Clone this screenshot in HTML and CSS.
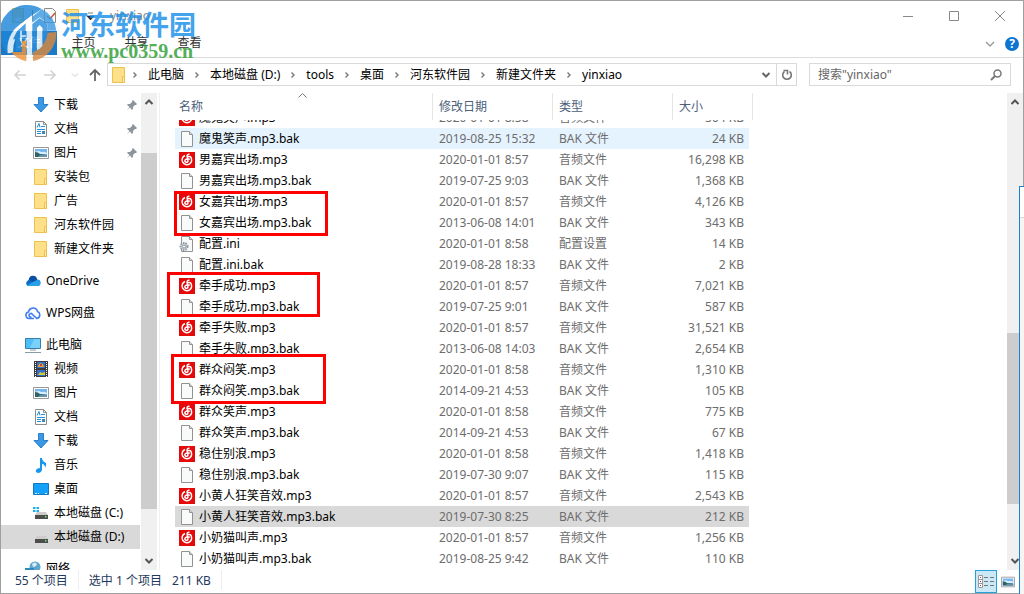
FILE: index.html
```html
<!DOCTYPE html>
<html lang="zh-CN">
<head>
<meta charset="utf-8">
<title>yinxiao</title>
<meta name="viewport" content="width=device-width">
<link rel="stylesheet" href="styles.css">
</head>
<body>
<svg class="defs" aria-hidden="true">
  <symbol id="folder" viewBox="0 0 16 16"><path d="M1.500 .5h12v15h-12z" fill="#ffe08a" stroke="#ecc24d"/><path d="M11.500 9.500h2v6h-2z" fill="#ffe9a8" stroke="#ecc24d"/></symbol>
  <symbol id="download" viewBox="0 0 16 16"><path d="M5.500 .5h5v7h4.500L8 15 1 7.500h4.500z" fill="#3c97e4" stroke="#2a7fcb"/></symbol>
  <symbol id="doc" viewBox="0 0 16 16"><path d="M2.500 .5h8l3 3v12h-11z" fill="#fff" stroke="#8b8b8b"/><path d="M10.500 .5v3h3" fill="none" stroke="#8b8b8b"/><path d="M4 6.500 6 2.500 7 6.500M8 5.500h4M4 8.500h8M4 10.500h4M4 12.500h4" fill="none" stroke="#1c8fd6"/><path d="M9 10h3v3H9z" fill="#3d86b5"/></symbol>
  <symbol id="picture" viewBox="0 0 16 16"><path d="M.5 2.500h15v11H.5z" fill="#fff" stroke="#999"/><path d="M2 4h12v8H2z" fill="#73b5ef"/><path d="M2 7q4-2 6 0 3-1 6 1v1H2z" fill="#d7effc"/><path d="M2 7q3 0 5 2l7 1v2H2z" fill="#2e6265"/><path d="M7 10h7v2H5z" fill="#6891a8"/></symbol>
  <symbol id="pin" viewBox="0 0 12 12"><path d="M7 1l4 4-1 1h-1L7 8v2L6 11 4 8.500 1 11 3.500 8 1 6l1-1h2l2-2V2z" fill="#8a959e"/></symbol>
  <symbol id="onedrive" viewBox="0 0 16 16"><path d="M3 13a3 3 0 0 1 0-5.500A5 5 0 0 1 12 6.500 3.300 3.300 0 0 1 13 13z" fill="#0f6cc4"/><path d="M4 7a4 4 0 0 1 8-.5L8 9z" fill="#0a4fa3"/><path d="M2 12.500 8 9l5-2.300A3.300 3.300 0 0 1 13 13H3z" fill="#27a0ea"/></symbol>
  <symbol id="wps" viewBox="0 0 16 16"><path d="M9 13.500H4a3.300 3.300 0 0 1-.5-6.500 4.600 4.600 0 0 1 9-.5A3.700 3.700 0 0 1 12 13.500L7.500 9.500a1.800 1.800 0 1 0-1 2.500" fill="none" stroke="#3f7df0" stroke-width="1.600"/></symbol>
  <symbol id="pc" viewBox="0 0 16 16"><path d="M.5 1.500h15v10H.5z" fill="#4fbdf7" stroke="#367fa9"/><path d="M9 2h6v9H5z" fill="#7bd0fb"/><path d="M5 13h6M0 15.500h16" stroke="#8a9ba5"/></symbol>
  <symbol id="video" viewBox="0 0 16 16"><path d="M1 0h14v16H1z" fill="#3c3c3c"/><path d="M2.500 1v15M13.500 1v15" stroke="#fff" stroke-dasharray="1 1"/><path d="M4 1h8v6H4zM4 9h8v6H4z" fill="#376fd0"/><path d="M5 5l2-3 3 1 1 3H5z" fill="#e5a72c"/><path d="M5 14l2-3 2 1 3-1v3z" fill="#c9cf38"/><path d="M7 3h2v2H7z" fill="#cb3d35"/></symbol>
  <symbol id="music" viewBox="0 0 16 16"><path d="M7 1h2q0 3 4 5 1 2-1 5 0-4-3-4v6q-1 3-4 3-3-1-2-3 1-2 4-2z" fill="#1897ef"/></symbol>
  <symbol id="desktop" viewBox="0 0 16 16"><path d="M.5 2.500h15v11H.5z" fill="#12a0fa" stroke="#1178bf"/><path d="M2 12.500h2M5 12.500h1M12 12.500h2" stroke="#d8f1ff"/></symbol>
  <symbol id="drive" viewBox="0 0 16 16"><path d="M4 7h9l2 3H2z" fill="#ccc"/><path d="M2 10h13v4H2z" fill="#4d4d4d"/><path d="M12 11h1.500v1.500H12z" fill="#5ff06f"/></symbol>
  <symbol id="sysdrive" viewBox="0 0 16 16"><use href="#drive"/><path d="M0 2h2.500v2H0zM3.500 2H6v2H3.500zM0 5h2.500v2H0zM3.500 5H6v2H3.500z" fill="#16b0f0"/></symbol>
  <symbol id="network" viewBox="0 0 16 16"><circle cx="10" cy="6" r="5.500" fill="#5fa6cc"/><path d="M7 3q3-3 5 0-1 3-4 3z" fill="#d5edf7"/><path d="M0 7h9v7H0z" fill="#2f89bb"/></symbol>
  <symbol id="mp3" viewBox="0 0 16 16"><path d="M0 0h16v16H0z" fill="#e50a0a"/><path d="M6 3.500a4.800 4.800 0 1 0 5.500 1.300Q9.500 4 8 5.200M8.300 5 9 9.300a1.600 1.600 0 1 1-2.200-2q2.500-1.300 4 .2M8.200 5.200Q7.500 2 10.500 2.300" fill="none" stroke="#fff" stroke-width="1.500"/></symbol>
  <symbol id="bak" viewBox="0 0 16 16"><path d="M2.500 .5h8l3 3v12h-11z" fill="#f9fafa" stroke="#929292"/><path d="M10.500 .5v3h3" fill="#ddd" stroke="#929292"/></symbol>
  <symbol id="ini" viewBox="0 0 16 16"><use href="#bak"/><circle cx="5" cy="10.500" r="3.500" fill="#d3d8dc" stroke="#8f989f" stroke-width="2" stroke-dasharray="1.500 1"/><circle cx="5" cy="10.500" r="1.500" fill="#fff" stroke="#8f989f"/></symbol>
  <symbol id="right" viewBox="0 0 8 8"><path d="M2.500 1.500 5 4 2.500 6.500" fill="none" stroke="#777" stroke-width="1.400"/></symbol>
  <symbol id="down" viewBox="0 0 10 10"><path d="M1.500 3 5 6.500 8.500 3" fill="none" stroke="currentColor" stroke-width="2"/></symbol>
  <symbol id="up" viewBox="0 0 10 10"><path d="M1.500 7 5 3.500 8.500 7" fill="none" stroke="currentColor" stroke-width="2"/></symbol>
</svg>

<div class="window">
  <header class="titlebar">
    <svg class="quick" width="82" height="16" viewBox="0 0 82 16"><path d="M.5 .5h11v14H.5z" fill="#f7da7d" stroke="#dfbd55"/><path d="M6 7l1 3h3l-2 2 1 3-3-2-3 2 1-3-2-2h3z" fill="#fff"/><path d="M20.500 2v12" stroke="#777"/><path d="M32.500 .5h8l3 3v11h-11z" fill="#fafafa" stroke="#8a8a8a"/><path d="M35 8l3 3 5-6" fill="none" stroke="#d4562a" stroke-width="1.500"/><path d="M54.500 1.500h12v13h-12z" fill="#ffe08a" stroke="#ecc24d"/><path d="M76 5h5M75 8h7l-3.500 4z" stroke="#222" fill="#222" stroke-width=".6"/></svg>
    <h1 class="caption">yinxiao</h1>
    <div class="winbtns">
      <button aria-label="最小化"><svg width="12" height="12"><path d="M1 6.500h10" stroke="#888"/></svg></button>
      <button aria-label="最大化"><svg width="12" height="12"><path d="M1.500 1.500h9v9h-9z" fill="none" stroke="#888"/></svg></button>
      <button aria-label="关闭"><svg width="12" height="12"><path d="M1 1l10 10M11 1 1 11" stroke="#888"/></svg></button>
    </div>
  </header>

  <nav class="ribbon">
    <button class="tab file">文件</button>
    <button class="tab">主页</button>
    <button class="tab">共享</button>
    <button class="tab">查看</button>
    <button class="expand" aria-label="展开功能区"><svg width="10" height="10"><path d="M1 3l4 4 4-4" fill="none" stroke="#999" stroke-width="1.300"/></svg></button>
    <button class="help" aria-label="帮助">?</button>
  </nav>

  <div class="address">
    <div class="history">
      <button aria-label="后退"><svg width="14" height="12"><path d="M13 6H2M6.500 1.500 2 6l4.500 4.500" fill="none" stroke="#d2d2d2" stroke-width="1.600"/></svg></button>
      <button aria-label="前进"><svg width="14" height="12"><path d="M1 6h11M7.500 1.500 12 6l-4.500 4.500" fill="none" stroke="#d2d2d2" stroke-width="1.600"/></svg></button>
      <button class="small" aria-label="最近浏览的位置"><svg width="8" height="8"><path d="M1 2.500l3 3 3-3" fill="none" stroke="#ccc"/></svg></button>
      <button class="small" aria-label="向上"><svg width="14" height="14"><path d="M7 13V2M2 7l5-5 5 5" fill="none" stroke="#666" stroke-width="1.800"/></svg></button>
    </div>
    <div class="path">
      <svg class="icon"><use href="#folder"/></svg>
      <svg class="sep"><use href="#right"/></svg><a href="#">此电脑</a>
      <svg class="sep"><use href="#right"/></svg><a href="#">本地磁盘 (D:)</a>
      <svg class="sep"><use href="#right"/></svg><a href="#">tools</a>
      <svg class="sep"><use href="#right"/></svg><a href="#">桌面</a>
      <svg class="sep"><use href="#right"/></svg><a href="#">河东软件园</a>
      <svg class="sep"><use href="#right"/></svg><a href="#">新建文件夹</a>
      <svg class="sep"><use href="#right"/></svg><a href="#">yinxiao</a>
      <button class="drop" aria-label="上一个位置"><svg width="10" height="10"><use href="#down"/></svg></button>
      <button class="refresh" aria-label="刷新"><svg width="12" height="12"><path d="M8.500 2.500a4.300 4.300 0 1 1-5 0M2.500 1.500h4v4" fill="none" stroke="#777" stroke-width="1.600"/></svg></button>
    </div>
    <div class="search">
      <input type="text" placeholder='搜索"yinxiao"' aria-label="搜索">
      <svg width="12" height="12"><circle cx="7.500" cy="4.500" r="3.500" fill="none" stroke="#777" stroke-width="1.500"/><path d="M5 7 1 11" stroke="#777" stroke-width="2"/></svg>
    </div>
  </div>

  <div class="content">
    <aside class="tree">
      <a class="node sub" href="#"><svg class="icon"><use href="#download"/></svg>下载<svg class="pin"><use href="#pin"/></svg></a>
      <a class="node sub" href="#"><svg class="icon"><use href="#doc"/></svg>文档<svg class="pin"><use href="#pin"/></svg></a>
      <a class="node sub" href="#"><svg class="icon"><use href="#picture"/></svg>图片<svg class="pin"><use href="#pin"/></svg></a>
      <a class="node sub" href="#"><svg class="icon"><use href="#folder"/></svg>安装包</a>
      <a class="node sub" href="#"><svg class="icon"><use href="#folder"/></svg>广告</a>
      <a class="node sub" href="#"><svg class="icon"><use href="#folder"/></svg>河东软件园</a>
      <a class="node sub" href="#"><svg class="icon"><use href="#folder"/></svg>新建文件夹</a>
      <a class="node root" href="#"><svg class="icon"><use href="#onedrive"/></svg>OneDrive</a>
      <a class="node root" href="#"><svg class="icon"><use href="#wps"/></svg>WPS网盘</a>
      <a class="node root" href="#"><svg class="icon"><use href="#pc"/></svg>此电脑</a>
      <a class="node sub" href="#"><svg class="icon"><use href="#video"/></svg>视频</a>
      <a class="node sub" href="#"><svg class="icon"><use href="#picture"/></svg>图片</a>
      <a class="node sub" href="#"><svg class="icon"><use href="#doc"/></svg>文档</a>
      <a class="node sub" href="#"><svg class="icon"><use href="#download"/></svg>下载</a>
      <a class="node sub" href="#"><svg class="icon"><use href="#music"/></svg>音乐</a>
      <a class="node sub" href="#"><svg class="icon"><use href="#desktop"/></svg>桌面</a>
      <a class="node sub" href="#"><svg class="icon"><use href="#sysdrive"/></svg>本地磁盘 (C:)</a>
      <a class="node sub current" href="#"><svg class="icon"><use href="#drive"/></svg>本地磁盘 (D:)</a>
      <a class="node root" href="#"><svg class="icon"><use href="#network"/></svg>网络</a>
    </aside>
    <div class="scrollbar tree-scroll">
      <svg width="10" height="10"><use href="#up"/></svg>
      <div class="track"><div class="thumb"></div></div>
      <svg width="10" height="10"><use href="#down"/></svg>
    </div>

    <main class="files">
      <table>
        <thead>
          <tr><th>名称<svg class="sort" width="9" height="5"><path d="M.5 4.500l4-4 4 4" fill="none" stroke="#777"/></svg></th><th>修改日期</th><th>类型</th><th>大小</th></tr>
        </thead>
        <tbody>
          <tr><td><svg class="icon"><use href="#mp3"/></svg>魔鬼笑声.mp3</td><td>2020-01-01 8:58</td><td>音频文件</td><td>504 KB</td></tr>
          <tr class="hover"><td><svg class="icon"><use href="#bak"/></svg>魔鬼笑声.mp3.bak</td><td>2019-08-25 15:32</td><td>BAK 文件</td><td>24 KB</td></tr>
          <tr><td><svg class="icon"><use href="#mp3"/></svg>男嘉宾出场.mp3</td><td>2020-01-01 8:57</td><td>音频文件</td><td>16,298 KB</td></tr>
          <tr><td><svg class="icon"><use href="#bak"/></svg>男嘉宾出场.mp3.bak</td><td>2019-07-25 9:03</td><td>BAK 文件</td><td>1,368 KB</td></tr>
          <tr><td><svg class="icon"><use href="#mp3"/></svg>女嘉宾出场.mp3</td><td>2020-01-01 8:57</td><td>音频文件</td><td>4,126 KB</td></tr>
          <tr><td><svg class="icon"><use href="#bak"/></svg>女嘉宾出场.mp3.bak</td><td>2013-06-08 14:01</td><td>BAK 文件</td><td>343 KB</td></tr>
          <tr><td><svg class="icon"><use href="#ini"/></svg>配置.ini</td><td>2020-01-01 8:58</td><td>配置设置</td><td>14 KB</td></tr>
          <tr><td><svg class="icon"><use href="#bak"/></svg>配置.ini.bak</td><td>2019-08-28 18:33</td><td>BAK 文件</td><td>2 KB</td></tr>
          <tr><td><svg class="icon"><use href="#mp3"/></svg>牵手成功.mp3</td><td>2020-01-01 8:57</td><td>音频文件</td><td>7,021 KB</td></tr>
          <tr><td><svg class="icon"><use href="#bak"/></svg>牵手成功.mp3.bak</td><td>2019-07-25 9:01</td><td>BAK 文件</td><td>587 KB</td></tr>
          <tr><td><svg class="icon"><use href="#mp3"/></svg>牵手失败.mp3</td><td>2020-01-01 8:57</td><td>音频文件</td><td>31,521 KB</td></tr>
          <tr><td><svg class="icon"><use href="#bak"/></svg>牵手失败.mp3.bak</td><td>2013-06-08 14:03</td><td>BAK 文件</td><td>2,654 KB</td></tr>
          <tr><td><svg class="icon"><use href="#mp3"/></svg>群众闷笑.mp3</td><td>2020-01-01 8:58</td><td>音频文件</td><td>1,310 KB</td></tr>
          <tr><td><svg class="icon"><use href="#bak"/></svg>群众闷笑.mp3.bak</td><td>2014-09-21 4:53</td><td>BAK 文件</td><td>105 KB</td></tr>
          <tr><td><svg class="icon"><use href="#mp3"/></svg>群众笑声.mp3</td><td>2020-01-01 8:58</td><td>音频文件</td><td>775 KB</td></tr>
          <tr><td><svg class="icon"><use href="#bak"/></svg>群众笑声.mp3.bak</td><td>2014-09-21 4:53</td><td>BAK 文件</td><td>67 KB</td></tr>
          <tr><td><svg class="icon"><use href="#mp3"/></svg>稳住别浪.mp3</td><td>2020-01-01 8:58</td><td>音频文件</td><td>1,418 KB</td></tr>
          <tr><td><svg class="icon"><use href="#bak"/></svg>稳住别浪.mp3.bak</td><td>2019-07-30 9:07</td><td>BAK 文件</td><td>115 KB</td></tr>
          <tr><td><svg class="icon"><use href="#mp3"/></svg>小黄人狂笑音效.mp3</td><td>2020-01-01 8:57</td><td>音频文件</td><td>2,543 KB</td></tr>
          <tr class="selected"><td><svg class="icon"><use href="#bak"/></svg>小黄人狂笑音效.mp3.bak</td><td>2019-07-30 8:25</td><td>BAK 文件</td><td>212 KB</td></tr>
          <tr><td><svg class="icon"><use href="#mp3"/></svg>小奶猫叫声.mp3</td><td>2020-01-01 8:57</td><td>音频文件</td><td>1,256 KB</td></tr>
          <tr><td><svg class="icon"><use href="#bak"/></svg>小奶猫叫声.mp3.bak</td><td>2019-08-25 9:42</td><td>BAK 文件</td><td>110 KB</td></tr>
        </tbody>
      </table>
      <div class="mark mark-guest"></div>
      <div class="mark mark-success"></div>
      <div class="mark mark-laugh"></div>
    </main>
    <div class="scrollbar file-scroll">
      <svg width="10" height="10"><use href="#up"/></svg>
      <div class="track"><div class="thumb"></div></div>
      <svg width="10" height="10"><use href="#down"/></svg>
    </div>
  </div>

  <footer class="status">
    <div class="part"><span>55 个项目</span></div>
    <div class="part"><span>选中 1 个项目</span><span>211 KB</span></div>
    <div class="views">
      <button class="on" aria-label="详细信息"><svg width="18" height="14"><path d="M1.500 .5h4v4h-4zM1.500 4.500h4v4h-4zM1.500 8.500h4v4h-4z" fill="#fff" stroke="#999"/><path d="M3 2.500h1M3 6.500h1M3 10.500h1" stroke="#a33"/><path d="M7 2.500h4M13 2.500h4M7 6.500h4M13 6.500h4M7 10.500h4M13 10.500h4" stroke="#777"/></svg></button>
      <button aria-label="大图标"><svg width="14" height="14"><use href="#picture"/></svg></button>
    </div>
  </footer>
</div>

<div class="behind"></div>

<div class="watermark">
  <svg width="56" height="62" viewBox="0 0 168 186">
    <path d="M122 27A83 83 0 0 0 6 138Q10 152 20 160 14 106 56 74 88 48 122 27z" fill="#1f86d8"/>
    <path d="M20 160Q14 106 56 74L94 46v14L64 86Q36 108 36 158z" fill="#fff"/>
    <path d="M122 27A83 83 0 0 1 166 92H140V72L116 52 94 68V50z" fill="#3c9be2"/>
    <path d="M166 96A83 83 0 0 1 96 183V150Q122 140 138 98z" fill="#d98a3e"/>
    <path d="M30 156A83 83 0 0 0 76 184V122H62v34z" fill="#f0963c"/>
    <path d="M48 94 74 70V118H60v34H44V118H36z" fill="#2a8edc"/>
    <path d="M76 74 94 60V184H78z" fill="#fff"/>
    <path d="M94 72 116 54 140 72V98Q136 124 124 136V84L116 76 108 84V150L94 158z" fill="#2a8edc"/>
    <path d="M108 84 116 76 124 84V138Q116 148 108 150z" fill="#fff"/>
    <path d="M60 92v32M60 108h16" stroke="#fff" stroke-width="5"/>
  </svg>
  <div class="brand"><b>河东软件园</b><span>www.pc0359.cn</span></div>
</div>
</body>
</html>
```
FILE: styles.css
```css
* {
  box-sizing: border-box;
}
body {
  margin: 0;
  font: 12px/20px "Noto Sans", "Noto Sans CJK SC", sans-serif;
  color: #000;
}
a {
  color: inherit;
  text-decoration: none;
}
button {
  display: flex;
  align-items: center;
  justify-content: center;
  padding: 0;
  border: 0;
  background: none;
  font: inherit;
}
svg { flex: none; }
.defs {
  position: absolute;
  width: 0;
  height: 0;
}
.icon {
  width: 16px;
  height: 16px;
}
.window {
  display: flex;
  flex-direction: column;
  height: 100vh;
  border: 1px solid #a0a0a0;
  background: #fff;
}

/* title bar and ribbon */
.titlebar {
  display: flex;
  align-items: center;
  height: 30px;
  padding-left: 11px;
}
.caption {
  margin: 0 0 0 16px;
  font-size: 12px;
  font-weight: normal;
  color: #888;
}
.winbtns {
  display: flex;
  margin-left: auto;
}
.winbtns button {
  width: 46px;
  height: 30px;
}
.ribbon {
  display: flex;
  height: 27px;
  border-bottom: 1px solid #dcdcdc;
}
.tab {
  width: 53px;
  height: 24px;
  color: #333;
}
.tab.file {
  width: 56px;
  background: #1979ca;
  color: #fff;
}
.expand {
  width: 24px;
  margin-left: auto;
}
.help {
  width: 14px;
  height: 14px;
  margin: 6px 4px 0 3px;
  border-radius: 50%;
  background: #0d74d1;
  color: #fff;
  font-weight: bold;
}

/* address bar */
.address {
  display: flex;
  align-items: flex-start;
  height: 34px;
  padding: 5px 12px 0 0;
}
.history {
  display: flex;
  width: 106px;
  height: 23px;
  padding-left: 4px;
}
.history button { width: 30px; }
.history .small { width: 20px; }
.path {
  display: flex;
  flex: 1;
  align-items: center;
  height: 23px;
  border: 1px solid #d9d9d9;
}
.path .icon { margin: 0 0 0 3px; }
.sep {
  width: 8px;
  height: 8px;
  margin: 0 9px;
}
.path .icon + .sep { margin-left: 4px; }
.drop, .refresh {
  width: 20px;
  height: 21px;
  color: #666;
}
.drop { margin-left: auto; }
.refresh { border-left: 1px solid #d9d9d9; }
.search {
  display: flex;
  align-items: center;
  width: 202px;
  height: 23px;
  margin-left: 12px;
  padding: 0 8px;
  border: 1px solid #d9d9d9;
}
.search input {
  flex: 1;
  min-width: 0;
  padding: 0;
  border: 0;
  font: inherit;
}
.search input::placeholder { color: #666; }

/* navigation tree */
.content {
  display: flex;
  flex: 1;
  min-height: 0;
  padding-top: 1px;
}
.tree {
  width: 139px;
  overflow: hidden;
}
.node {
  display: flex;
  align-items: center;
  gap: 5px;
  height: 24px;
  white-space: nowrap;
}
.sub { padding-left: 32px; }
.root {
  margin-top: 8px;
  padding-left: 24px;
}
.current { background: #d9d9d9; }
.pin {
  width: 12px;
  height: 12px;
  margin: 0 2px 0 auto;
}
.scrollbar {
  display: flex;
  flex-direction: column;
  align-items: center;
  gap: 5px;
  width: 16px;
  padding: 4px 0;
  background: #f0f0f0;
  color: #555;
}
.track {
  flex: 1;
  width: 100%;
}
.thumb { background: #cdcdcd; }
.tree-scroll { margin-left: 1px; }
.tree-scroll .thumb {
  height: 81%;
  margin-top: 41px;
}
.file-scroll .thumb {
  height: 39%;
  margin-top: 221px;
}

/* file list */
.files {
  position: relative;
  flex: 1;
  display: flex;
  margin-left: 2px;
  padding-left: 15px;
  border-left: 1px solid #f0f0f0;
}
table {
  display: flex;
  flex-direction: column;
  min-height: 0;
}
tr {
  display: grid;
  grid-template-columns: 258px 120px 120px 1fr;
}
thead tr { width: 578px; }
th {
  position: relative;
  height: 27px;
  padding: 0 6px;
  border-right: 1px solid #e5e5e5;
  color: #4c607a;
  font-weight: normal;
  line-height: 27px;
  text-align: left;
}
th:first-child { padding-left: 4px; }
.sort {
  position: absolute;
  top: 0;
  right: 125px;
}
tbody {
  display: block;
  flex: 1;
  min-height: 0;
  overflow: hidden;
}
tbody tr {
  width: 574px;
  height: 21px;
}
/* list is scrolled part way into its first row */
tbody tr:first-child { margin-top: -13px; }
td {
  padding: 0 6px;
  color: #6d6d6d;
  line-height: 21px;
  white-space: nowrap;
}
td:first-child {
  display: flex;
  align-items: center;
  gap: 4px;
  padding: 0 4px;
  color: #000;
}
td:last-child {
  padding: 0 5px 0 0;
  text-align: right;
}
.hover { background: #e5f3ff; }
.selected { background: #d9d9d9; }
.mark {
  position: absolute;
  height: 45px;
  border: 3px solid #f00;
}
.mark-guest {
  top: 98px;
  left: 14px;
  width: 154px;
}
.mark-success {
  top: 179px;
  left: 7px;
  width: 153px;
}
.mark-laugh {
  top: 261px;
  left: 11px;
  width: 155px;
  height: 50px;
}

/* status bar */
.status {
  display: flex;
  height: 23px;
  padding-left: 14px;
  color: #1e395b;
}
.part {
  display: flex;
  gap: 10px;
  height: 20px;
  margin-right: 10px;
  padding: 1px 10px 0 0;
  border-right: 1px solid #eee;
}
.views {
  display: flex;
  margin-left: auto;
  padding-right: 4px;
}
.views button {
  width: 22px;
  height: 23px;
}
.views .on {
  border: 1px solid #26a0da;
  background: #cbe8f6;
}

/* edge of the window lying over this one */
.behind {
  position: absolute;
  top: 186px;
  right: 0;
  bottom: 0;
  width: 5px;
  border: solid #1b80d0;
  border-width: 1px 0 0 1px;
  background: linear-gradient(#fff 30px, #d8d8d8 30px, #d8d8d8 31px, #f5f5f5 31px);
}
.watermark {
  position: absolute;
  top: 0;
  left: 1px;
  display: flex;
  gap: 4px;
  opacity: .82;
}
.brand {
  display: flex;
  flex-direction: column;
  padding-top: 8px;
}
.brand b {
  color: #1b8fe8;
  font-size: 27px;
  line-height: 33px;
}
.brand span {
  color: #2f9e35;
  font: bold 20px/20px "Liberation Serif", serif;
}
```
